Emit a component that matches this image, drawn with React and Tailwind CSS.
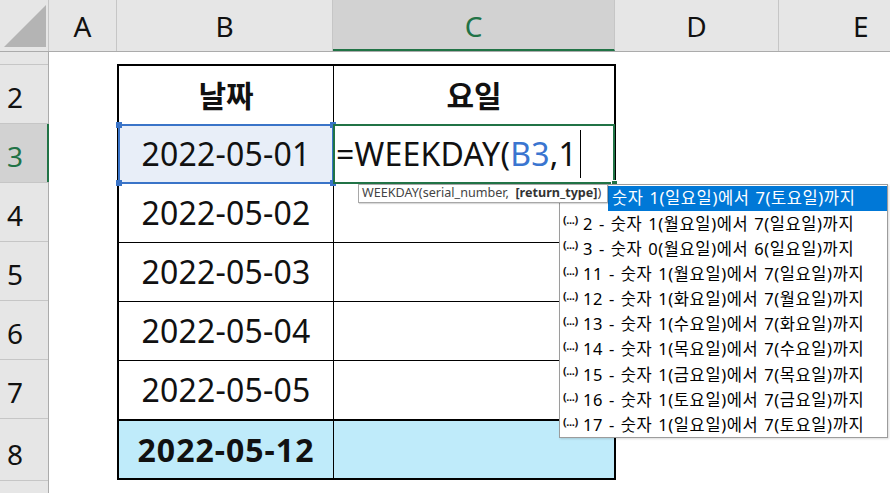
const items = [
  ["1", "숫자 1(일요일)에서 7(토요일)까지"],
  ["2", "숫자 1(월요일)에서 7(일요일)까지"],
  ["3", "숫자 0(월요일)에서 6(일요일)까지"],
  ["11", "숫자 1(월요일)에서 7(일요일)까지"],
  ["12", "숫자 1(화요일)에서 7(월요일)까지"],
  ["13", "숫자 1(수요일)에서 7(화요일)까지"],
  ["14", "숫자 1(목요일)에서 7(수요일)까지"],
  ["15", "숫자 1(금요일)에서 7(목요일)까지"],
  ["16", "숫자 1(토요일)에서 7(금요일)까지"],
  ["17", "숫자 1(일요일)에서 7(토요일)까지"],
];

const dates = ["2022-05-02", "2022-05-03", "2022-05-04", "2022-05-05"];

function Handle({ className }) {
  return <div className={"absolute w-[6px] h-[6px] bg-[#3A74C8] " + className} />;
}

export default function App() {
  return (
    <div className="w-[890px] h-[493px] overflow-hidden bg-white font-['Noto_Sans','Noto_Sans_CJK_KR',sans-serif] text-[#111] relative">
      {/* column headers */}
      <div className="flex h-[52px] border-b border-[#ABABAB] bg-[#E6E6E6] text-[28px] leading-none">
        <div className="w-[49px] shrink-0 border-r border-[#C6C6C6] relative">
          <svg className="absolute left-0 top-0" width="49" height="51" viewBox="0 0 49 51">
            <polygon points="4,47 46,5 46,47" fill="#B4B4B4" />
          </svg>
        </div>
        <div className="w-[68px] shrink-0 border-r border-[#C6C6C6] flex items-center justify-center">A</div>
        <div className="w-[216px] shrink-0 border-r border-[#C6C6C6] flex items-center justify-center">B</div>
        <div className="w-[282px] shrink-0 bg-[#D2D2D2] text-[#217346] border-b-2 border-[#217346] border-r border-r-[#C6C6C6] flex items-center justify-center pt-[2px]">C</div>
        <div className="w-[164px] shrink-0 border-r border-[#C6C6C6] flex items-center justify-center">D</div>
        <div className="flex-1 flex items-center justify-start pl-[74px]">E</div>
      </div>

      <div className="flex h-[441px]">
        {/* row headers */}
        <div className="w-[49px] shrink-0 flex flex-col bg-[#E6E6E6] border-r border-[#ABABAB] text-[28px] leading-none">
          <div className="h-[13px] shrink-0 border-b border-[#C6C6C6]" />
          {["2", "3", "4", "5", "6", "7"].map((n) => (
            <div
              key={n}
              className={
                "h-[59px] shrink-0 border-b border-[#C6C6C6] flex items-center pl-[7px] pt-[6px] relative " +
                (n === "3" ? "bg-[#D2D2D2] text-[#217346]" : "")
              }
            >
              {n}
              {n === "3" && <div className="absolute right-[-1px] top-0 bottom-0 w-[2px] bg-[#217346]" />}
            </div>
          ))}
          <div className="h-[62px] shrink-0 border-b border-[#C6C6C6] flex items-center pl-[7px] pt-[8px]">8</div>
          <div className="flex-1" />
        </div>

        {/* cells */}
        <div className="flex-1 pl-[68px] pt-[12px]">
          <div className="w-[499px] bg-black p-[2px] flex flex-col">
            {/* row 2 */}
            <div className="flex gap-px h-[58px]">
              <div className="w-[214px] bg-white flex items-center justify-center text-[30px] font-bold">날짜</div>
              <div className="w-[280px] bg-white flex items-center justify-center text-[30px] font-bold">요일</div>
            </div>
            {/* row 3 */}
            <div className="flex gap-px h-[58px] mt-px">
              <div className="w-[214px] bg-[#E8EEF8] relative flex items-center justify-center text-[32px] tracking-[0.2px]">
                2022-05-01
                <div className="absolute -inset-[1px] border-2 border-[#3A74C8]" />
                <Handle className="-left-[3px] -top-[3px]" />
                <Handle className="-right-[3px] -top-[3px]" />
                <Handle className="-left-[3px] -bottom-[3px]" />
                <Handle className="-right-[3px] -bottom-[3px]" />
              </div>
              <div className="w-[280px] bg-white relative flex items-center pl-[2px] text-[32px] tracking-[0.2px]">
                <span>=WEEKDAY(</span>
                <span className="text-[#3A75D0]">B3</span>
                <span>,1</span>
                <span className="ml-[3px] w-px h-[48px] bg-black" />
                <div className="absolute -inset-[1px] border-2 border-[#217346]" />
                <div className="absolute -right-[4px] -bottom-[4px] w-[7px] h-[7px] bg-[#217346] border border-white" />
              </div>
            </div>
            {dates.map((d) => (
              <div key={d} className="flex gap-px h-[58px] mt-px">
                <div className="w-[214px] bg-white flex items-center justify-center text-[32px] tracking-[0.2px]">{d}</div>
                <div className="w-[280px] bg-white" />
              </div>
            ))}
            {/* row 8 */}
            <div className="flex gap-px h-[57px] mt-[2px]">
              <div className="w-[214px] bg-[#BFEBFA] flex items-center justify-center text-[32px] font-bold tracking-[1px]">2022-05-12</div>
              <div className="w-[280px] bg-[#BFEBFA]" />
            </div>
          </div>
        </div>
      </div>

      {/* autocomplete dropdown */}
      <div className="absolute left-[559px] top-[184px] w-[329px] h-[254px] bg-white border border-[#9C9C9C] shadow-[1px_1px_2px_rgba(0,0,0,0.15)] pt-px text-[16.5px] tracking-[0.6px] [word-spacing:1px] leading-none text-black">
        {items.map(([n, t], i) =>
          i === 0 ? (
            <div key={n} className="flex h-[25.2px]">
              <div className="w-[48px] shrink-0 bg-white" />
              <div className="flex-1 bg-[#0078D7] text-white flex items-center pl-[4px] whitespace-nowrap">{t}</div>
            </div>
          ) : (
            <div key={n} className="flex h-[25.2px] items-center whitespace-nowrap">
              <span className="w-[23px] shrink-0 pl-[3px] self-start pt-[3px] text-[11px] font-bold tracking-[-0.4px] [word-spacing:0] leading-none text-[#111]">(...)</span>
              <span>{n} - {t}</span>
            </div>
          )
        )}
      </div>

      {/* tooltip */}
      <div className="absolute left-[358px] top-[184px] w-[250px] h-[19px] bg-white border border-[#A8A8A8] shadow-[1px_1px_1px_rgba(0,0,0,0.15)] flex items-center pl-[3px] text-[12.6px] leading-none text-[#444] whitespace-nowrap">
        WEEKDAY(serial_number,&nbsp;&nbsp;<span className="font-bold text-[#333]">[return_type]</span>)
      </div>
    </div>
  );
}
